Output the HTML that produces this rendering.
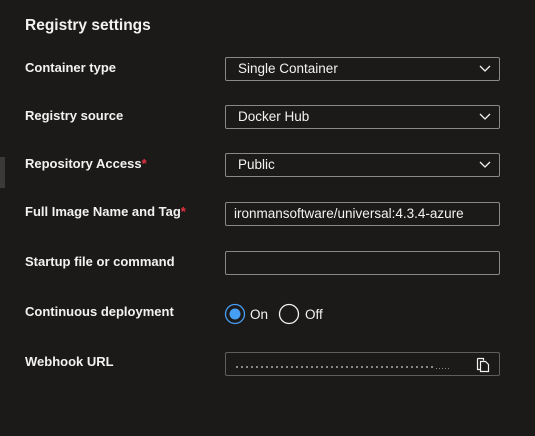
<!DOCTYPE html><html><head><style>
body{margin:0;width:535px;height:436px;background:#1b1a19;font-family:"Liberation Sans",sans-serif;color:#f3f2f1;position:relative;overflow:hidden}
.a{position:absolute}
.t{left:25px;top:17px;font-size:15.5px;font-weight:bold}
.l{left:25px;font-size:13px;font-weight:bold}
.l span{color:#e8323f}
.b{left:225px;width:273px;height:22px;border:1px solid #8a8886;border-radius:2px;font-size:13.5px;line-height:22px;box-sizing:content-box}
.b div{padding-left:12px}
.b svg{position:absolute;right:8px;top:7px}
</style></head><body>
<div class="a" style="left:0;top:157px;width:5px;height:31px;background:#3b3a39"></div>
<div class="a t">Registry settings</div>
<div class="a l" style="top:60px">Container type</div>
<div class="a b" style="top:57px"><div>Single Container</div><svg width="12" height="8"><path d="M1 1l5 5 5-5" stroke="#f3f2f1" fill="none" stroke-width="1.3"/></svg></div>
<div class="a l" style="top:108px">Registry source</div>
<div class="a b" style="top:105px"><div>Docker Hub</div><svg width="12" height="8"><path d="M1 1l5 5 5-5" stroke="#f3f2f1" fill="none" stroke-width="1.3"/></svg></div>
<div class="a l" style="top:156px">Repository Access<span>*</span></div>
<div class="a b" style="top:153px"><div>Public</div><svg width="12" height="8"><path d="M1 1l5 5 5-5" stroke="#f3f2f1" fill="none" stroke-width="1.3"/></svg></div>
<div class="a l" style="top:204px">Full Image Name and Tag<span>*</span></div>
<div class="a b" style="top:202px"><div style="padding-left:8px">ironmansoftware/universal:4.3.4-azure</div></div>
<div class="a l" style="top:254px">Startup file or command</div>
<div class="a b" style="top:251px"></div>
<div class="a l" style="top:304px">Continuous deployment</div>
<svg class="a" style="left:224px;top:303px" width="110" height="22"><circle cx="11" cy="11" r="9.5" stroke="#479ef5" stroke-width="1.3" fill="none"/><circle cx="11" cy="11" r="5.5" fill="#479ef5"/><circle cx="65" cy="11" r="9.5" stroke="#f3f2f1" stroke-width="1.3" fill="none"/>
<text x="26" y="16" fill="#f3f2f1" font-size="13.5" font-family="Liberation Sans">On</text><text x="81" y="16" fill="#f3f2f1" font-size="13.5" font-family="Liberation Sans">Off</text></svg>
<div class="a l" style="top:354px">Webhook URL</div>
<div class="a b" style="top:352px;border-color:#605e5c">
<div class="a" style="left:10px;top:13px;width:198px;height:2px;padding:0;background:repeating-linear-gradient(90deg,#8a8886 0 2px,transparent 2px 5px)"></div>
<div class="a" style="left:210px;top:15px;width:15px;height:1px;padding:0;background:repeating-linear-gradient(90deg,#8a8886 0 1px,transparent 1px 3px)"></div>
<svg style="right:9px;top:4px" width="14" height="16"><path d="M1.5 1.5h6v2M1.5 1.5v11h3" stroke="#f3f2f1" fill="none" stroke-width="1.2"/><path d="M4.5 4.5h5l3 3v7h-8z" stroke="#f3f2f1" fill="none" stroke-width="1.2"/></svg></div>
</body></html>
